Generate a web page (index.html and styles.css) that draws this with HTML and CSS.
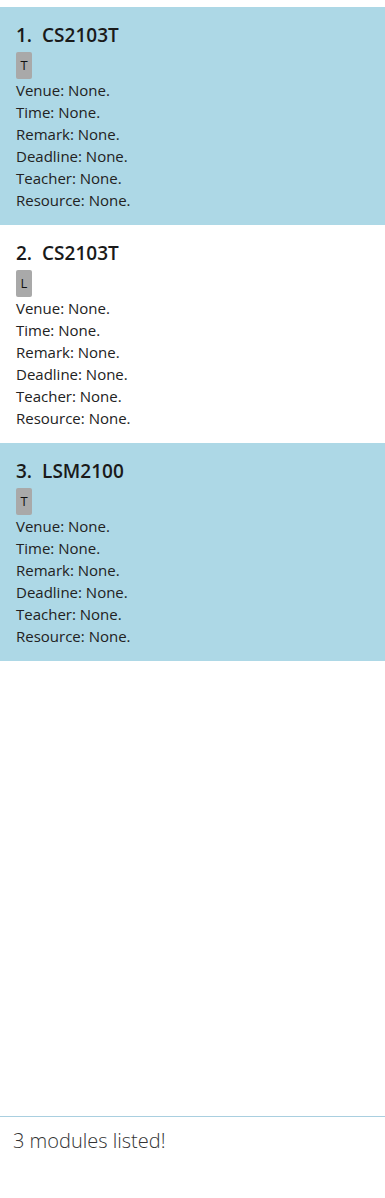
FILE: index.html
```html
<!DOCTYPE html>
<html lang="en">
<head>
    <meta charset="UTF-8">
    <meta name="viewport" content="width=device-width, initial-scale=1.0">
    <title>Modules</title>
    <link rel="stylesheet" href="styles.css">
</head>
<body>
    <div class="app">
        <ul class="module-list">
            <li class="module-card odd">
                <h3 class="title"><span>1.</span><span>CS2103T</span></h3>
                <div class="tags"><span class="tag">T</span></div>
                <p>Venue: None.</p>
                <p>Time: None.</p>
                <p>Remark: None.</p>
                <p>Deadline: None.</p>
                <p>Teacher: None.</p>
                <p>Resource: None.</p>
            </li>
            <li class="module-card">
                <h3 class="title"><span>2.</span><span>CS2103T</span></h3>
                <div class="tags"><span class="tag">L</span></div>
                <p>Venue: None.</p>
                <p>Time: None.</p>
                <p>Remark: None.</p>
                <p>Deadline: None.</p>
                <p>Teacher: None.</p>
                <p>Resource: None.</p>
            </li>
            <li class="module-card odd">
                <h3 class="title"><span>3.</span><span>LSM2100</span></h3>
                <div class="tags"><span class="tag">T</span></div>
                <p>Venue: None.</p>
                <p>Time: None.</p>
                <p>Remark: None.</p>
                <p>Deadline: None.</p>
                <p>Teacher: None.</p>
                <p>Resource: None.</p>
            </li>
        </ul>
        <div class="result">3 modules listed!</div>
    </div>
</body>
</html>
```

FILE: styles.css
```css
* {box-sizing: border-box;}
body {margin: 0; background: #fff; font-family: "Open Sans", "Noto Sans", sans-serif; color: #222;}
.app {height: 1198px; display: flex; flex-direction: column;}
.module-list {list-style: none; margin: 0; padding: 7px 0 0; flex: 1;}
.module-card {padding: 17px 16px 13px; height: 218px; display: flex; flex-direction: column; align-items: flex-start;}
.module-card.odd {background: #add8e6;}
.title {margin: 0; font-size: 19px; line-height: 23px; font-weight: 600; display: flex; gap: 10px; color: #1a1a1a;}
.tags {margin: 5px 0 0;}
.tag {display: inline-block; background: #a9a9a9; border-radius: 2px; width: 16px; height: 27px; line-height: 27px; text-align: center; font-size: 13px; color: #111;}
.module-card p {margin: 0; font-size: 15px; line-height: 22px;}
.result {border-top: 1px solid #a9cfe0; height: 82px; padding: 10px 13px; font-size: 20px; font-weight: 300; color: #333;}
```
